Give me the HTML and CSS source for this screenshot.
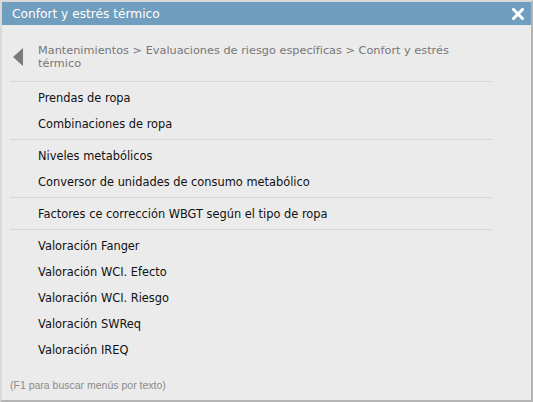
FILE: index.html
```html
<!DOCTYPE html>
<html lang="es">
<head>
<meta charset="utf-8">
<title>Confort y estrés térmico</title>
<link rel="stylesheet" href="styles.css">
</head>
<body>
<div class="window">
  <div class="titlebar">
    <span class="title">Confort y estrés térmico</span>
    <svg class="close" width="12" height="12" viewBox="0 0 12 12"><path d="M1.5 1.5 L10.5 10.5 M10.5 1.5 L1.5 10.5" stroke="#fff" stroke-width="3" stroke-linecap="square"/></svg>
  </div>
  <div class="content">
    <div class="crumbs">
      <svg class="back" width="10" height="18" viewBox="0 0 10 18"><path d="M10 0 L0 9 L10 18 Z" fill="#7a7a7a"/></svg>
      <div class="path">Mantenimientos &gt; Evaluaciones de riesgo específicas &gt; Confort y estrés térmico</div>
    </div>
    <div class="sep"></div>
    <div class="item">Prendas de ropa</div>
    <div class="item">Combinaciones de ropa</div>
    <div class="sep"></div>
    <div class="item">Niveles metabólicos</div>
    <div class="item">Conversor de unidades de consumo metabólico</div>
    <div class="sep"></div>
    <div class="item">Factores ce corrección WBGT según el tipo de ropa</div>
    <div class="sep"></div>
    <div class="item">Valoración Fanger</div>
    <div class="item">Valoración WCI. Efecto</div>
    <div class="item">Valoración WCI. Riesgo</div>
    <div class="item">Valoración SWReq</div>
    <div class="item">Valoración IREQ</div>
  </div>
  <div class="footer">(F1 para buscar menús por texto)</div>
</div>
</body>
</html>
```
FILE: styles.css
```css
html, body {
  margin: 0;
  padding: 0;
  background: #ebebeb;
}
body {
  width: 533px;
  height: 402px;
  overflow: hidden;
}
.window {
  box-sizing: border-box;
  width: 533px;
  height: 402px;
  border-style: solid;
  border-width: 2px;
  border-color: #dadada #b4b4b4 #b4b4b4 #dadada;
  background: #ebebeb;
  display: flex;
  flex-direction: column;
  font-family: "DejaVu Sans", sans-serif;
  position: relative;
}
.titlebar {
  height: 23px;
  background: #6f9ebf;
  display: flex;
  align-items: center;
  justify-content: space-between;
  padding: 0 7px 0 10px;
}
.title {
  color: #fff;
  font-size: 12.2px;
}
.close {
  display: block;
}
.content {
  flex: 1;
  padding: 0 39px 0 8px;
}
.crumbs {
  display: flex;
  align-items: center;
  height: 48px;
  padding-top: 8px;
}
.back {
  display: block;
  margin: 0 15px 0 3px;
}
.path {
  color: #777;
  font-size: 11.3px;
  line-height: 13px;
  flex: 1;
}
.sep {
  height: 1px;
  background: #d6d6d6;
  margin: 0 0 3px;
}
.item + .sep {
  margin-top: 2px;
}
.item {
  height: 26px;
  line-height: 26px;
  padding-left: 28px;
  font-size: 11.4px;
  color: #111;
}
.footer {
  padding: 0 0 9px 8px;
  font-family: "Liberation Sans", sans-serif;
  font-size: 10.5px;
  color: #8a8a8a;
}
```
